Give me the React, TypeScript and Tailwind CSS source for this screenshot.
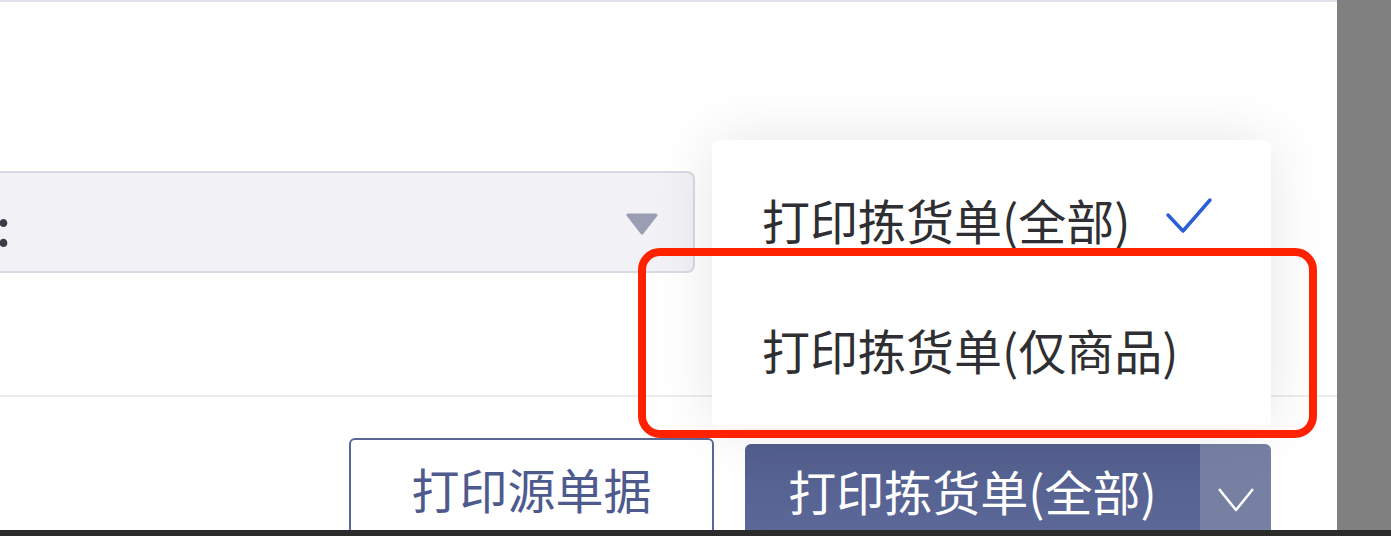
const font = { fontFamily: '"Noto Sans CJK SC", "Noto Sans", sans-serif' };

export default function App() {
  return (
    <div className="flex h-[536px] w-[1391px] flex-col overflow-hidden bg-white" style={font}>
      <div className="flex min-h-0 flex-1">
        <main className="relative flex-1 overflow-hidden border-t-2 border-[#e2e2ec] bg-white">
          {/* select field, cut off at the left */}
          <div className="pt-[169px]">
            <div className="flex h-[102px] w-[695px] items-center justify-between rounded-r-lg border-y-2 border-r-2 border-[#d8dae3] bg-[#f2f2f6] pr-[34px]">
              <span className="-ml-[4px] mt-[4px] text-[50px] font-medium leading-none text-[#3c3c48]">:</span>
              <svg width="34" height="22" viewBox="0 0 34 22" className="mt-[4px]">
                <path d="M3 2 H31 L17 20 Z" fill="#9b9db2" stroke="#9b9db2" strokeWidth="3" strokeLinejoin="round" />
              </svg>
            </div>
          </div>

          <div className="mt-[122px] h-[2px] bg-[#ececef]" />

          {/* footer buttons */}
          <div className="flex items-start gap-[31px] pl-[349px] pt-[41px]">
            <button className="flex h-[110px] w-[365px] items-start justify-center rounded-t-md border-2 border-[#5b6796] bg-white pt-[24px] text-[48px] leading-none text-[#4e5a8e]">
              打印源单据
            </button>
            <div className="mt-[6px] flex h-[110px] overflow-hidden rounded-t-md">
              <button className="flex w-[455px] items-start justify-center bg-gradient-to-b from-[#525e8c] to-[#5e6a9b] pt-[22px] text-[48px] leading-none text-white">
                打印拣货单(全部)
              </button>
              <div className="flex w-[71px] justify-center bg-[#7680a3] pt-[43px]">
                <svg width="38" height="26" viewBox="0 0 38 26" fill="none">
                  <path d="M2 2 L19 23 L36 2" stroke="white" strokeWidth="2.5" strokeLinejoin="round" />
                </svg>
              </div>
            </div>
          </div>

          {/* dropdown menu */}
          <div className="absolute left-[712px] top-[138px] w-[559px] rounded-lg bg-white py-[14px] shadow-[0_0_60px_rgba(0,0,0,0.10)]">
            <div className="flex h-[130px] items-center justify-between pl-[50px] pr-[58px] text-[48px] leading-none text-[#2f2f33]">
              <span>打印拣货单(全部)</span>
              <svg width="48" height="38" viewBox="0 0 48 38" fill="none" className="mb-[6px]">
                <path d="M3 18 L18 34 L45 3" stroke="#2b5fd6" strokeWidth="3.5" strokeLinejoin="round" strokeLinecap="round" />
              </svg>
            </div>
            <div className="flex h-[130px] items-center pl-[50px] text-[48px] leading-none text-[#2f2f33]">
              <span>打印拣货单(仅商品)</span>
            </div>
          </div>

          {/* red highlight annotation */}
          <div className="absolute left-[638px] top-[246px] h-[190px] w-[679px] rounded-[22px] border-[8px] border-[#ff2200]" />
        </main>
        <aside className="w-[54px] bg-[#808080]" />
      </div>
      <div className="h-[6px] bg-[#2b2b2b]" />
    </div>
  );
}
